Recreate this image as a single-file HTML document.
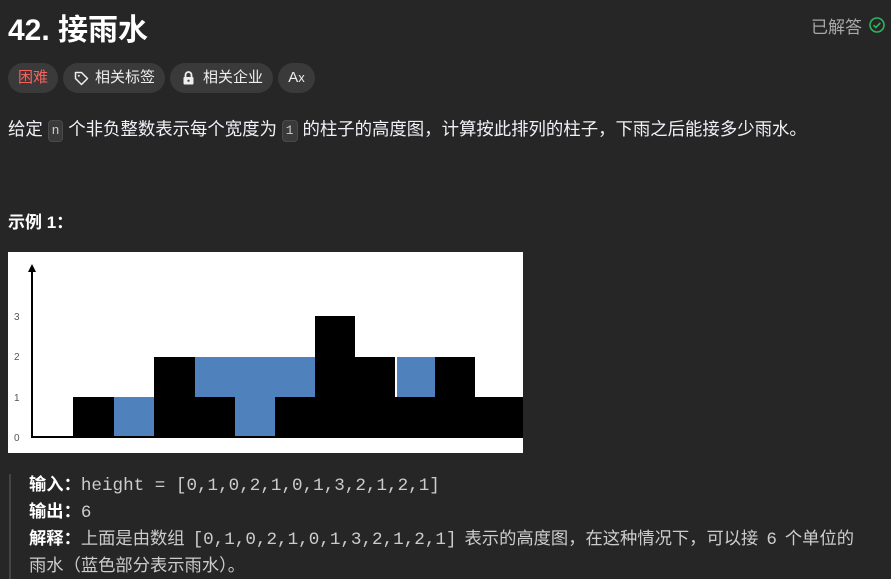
<!DOCTYPE html>
<html><head><meta charset="utf-8"><style>
body{margin:0;background:#262626;width:891px;height:579px;overflow:hidden;font-family:"Liberation Sans","Noto Sans CJK SC",sans-serif;color:#eff1f6;position:relative}
.a{position:absolute;white-space:nowrap}
.tag{position:absolute;top:63px;height:30px;border-radius:15px;background:#3a3a3a;font-size:15px;line-height:30px;color:#eee}
code{font-family:"Liberation Mono","Noto Sans CJK SC",monospace}
.ic{display:inline-block;background:#3a3a3a;border:1px solid #4a4a4a;border-radius:4px;color:#ccc;font-size:13px;line-height:20px;padding:0 3px;vertical-align:1px}
.q{font-size:17.3px;line-height:25px;color:#ccc}
.q code{font-size:17.6px}
.q code.m{margin:0 8px}
.q b{color:#fff}
</style></head><body>
<div class="a" style="left:8px;top:5px;font-size:30px;font-weight:bold;color:#fff">42. 接雨水</div>
<div class="a" style="left:811px;top:13px;font-size:17px;color:#a8a8a8">已解答</div>
<svg class="a" style="left:868px;top:16px" width="18" height="18" viewBox="0 0 18 18"><circle cx="9" cy="9" r="7" fill="none" stroke="#2db55d" stroke-width="1.6"/><path d="M5.5 9.2l2.3 2.3 4.5-4.5" fill="none" stroke="#2db55d" stroke-width="1.6"/></svg>
<div class="tag" style="left:8px;width:50px;text-align:center;color:#f8615c">困难</div>
<div class="tag" style="left:63px;width:102px"><svg style="position:absolute;left:11px;top:8px" width="15" height="15" viewBox="0 0 15 15"><path d="M1.5 1.5h6l6 6-6 6-6-6z" fill="none" stroke="#eee" stroke-width="1.5" stroke-linejoin="round"/><circle cx="4.8" cy="4.8" r="1" fill="#eee"/></svg><span style="position:absolute;left:32px">相关标签</span></div>
<div class="tag" style="left:170px;width:103px"><svg style="position:absolute;left:12px;top:8px" width="13" height="14" viewBox="0 0 13 14"><path d="M3.5 6V4a3 3 0 0 1 6 0v2" fill="none" stroke="#eee" stroke-width="1.8"/><rect x="1.5" y="6" width="10" height="7.5" rx="1" fill="#eee"/><circle cx="6.5" cy="9.7" r="1.1" fill="#3a3a3a"/></svg><span style="position:absolute;left:33px">相关企业</span></div>
<div class="tag" style="left:278px;width:37px;text-align:center">A<span style="font-size:13px">x</span></div>
<div class="a" style="left:8px;top:117px;font-size:17.4px;line-height:24px">给定 <code class="ic">n</code> 个非负整数表示每个宽度为 <code class="ic">1</code> 的柱子的高度图，计算按此排列的柱子，下雨之后能接多少雨水。</div>
<div class="a" style="left:8px;top:208px;font-size:17px;font-weight:bold;color:#fff">示例 1：</div>
<svg class="a" style="left:8px;top:252px" width="515" height="201" viewBox="8 252 515 201">
<rect x="8" y="252" width="515" height="201" fill="#fff"/>
<g fill="#4f81bd"><rect x="114" y="397" width="41" height="40"/><rect x="195" y="357" width="120" height="40"/><rect x="235" y="397" width="40" height="40"/><rect x="397" y="357" width="38" height="40"/></g>
<g fill="#000"><rect x="73" y="397" width="41" height="40"/><rect x="154" y="357" width="41" height="80"/><rect x="195" y="397" width="40" height="40"/><rect x="275" y="397" width="40" height="40"/><rect x="315" y="316" width="40" height="121"/><rect x="355" y="357" width="40" height="80"/><rect x="395" y="397" width="40" height="40"/><rect x="435" y="357" width="40" height="80"/><rect x="475" y="397" width="48" height="40"/></g>
<path d="M32 437V268M31 437H523" stroke="#000" stroke-width="2"/><path d="M28 272l4-8 4 8z" fill="#000"/>
<g font-size="10" fill="#555" font-family="Liberation Sans"><text x="14" y="441">0</text><text x="14" y="401">1</text><text x="14" y="360">2</text><text x="14" y="320">3</text></g>
</svg>
<div class="a" style="left:9px;top:474px;width:2px;height:105px;background:#444"></div>
<div class="a q" style="left:29px;top:472px"><b>输入：</b><code>height = [0,1,0,2,1,0,1,3,2,1,2,1]</code><br><b>输出：</b><code>6</code><br><b>解释：</b>上面是由数组<code class="m">[0,1,0,2,1,0,1,3,2,1,2,1]</code>表示的高度图，在这种情况下，可以接<code class="m">6</code>个单位的<br>雨水（蓝色部分表示雨水）。</div>
</body></html>
